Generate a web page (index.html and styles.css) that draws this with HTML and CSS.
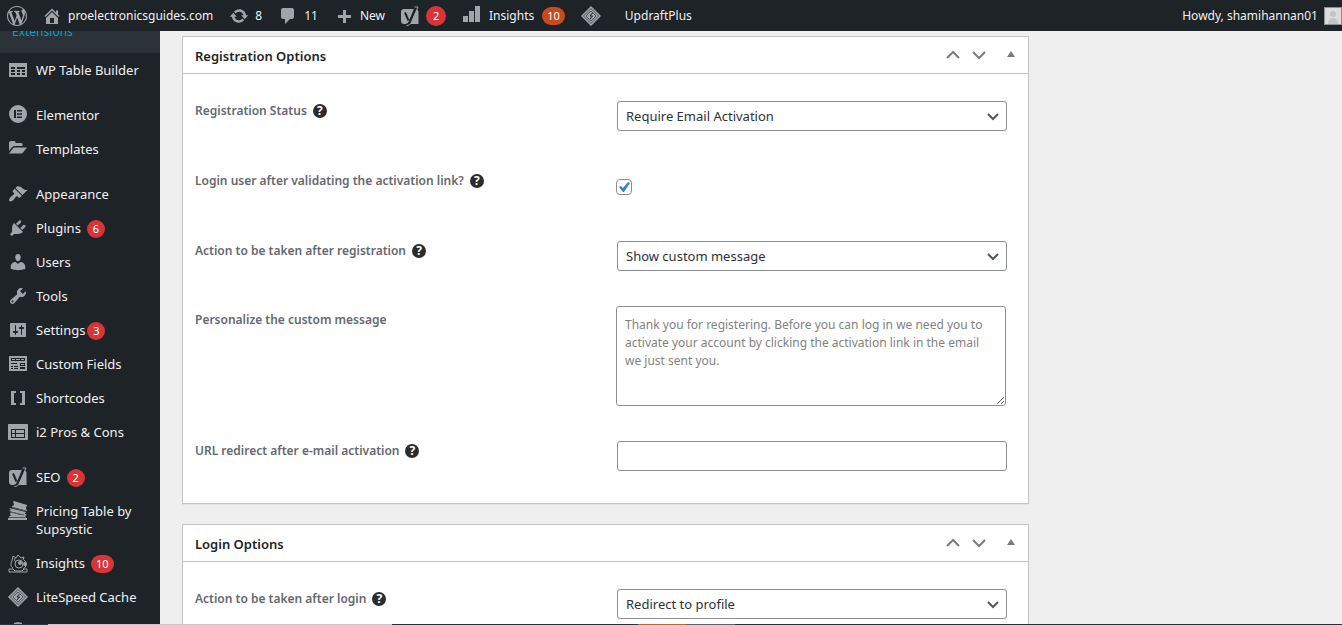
FILE: index.html
```html
<!DOCTYPE html>
<html lang="en">
<head>
    <meta charset="UTF-8">
    <meta name="viewport" content="width=device-width, initial-scale=1.0">
    <title>Registration Options</title>
    <link rel="stylesheet" href="styles.css">
</head>
<body>
    <!-- shared plugin icons -->
    <svg class="sprite" aria-hidden="true">
        <symbol id="icon-yoast" viewBox="0 0 20 20">
            <path d="M4 3h10l-5 15H4c-1.700 0-3-1.300-3-3V6c0-1.700 1.300-3 3-3zM16.500 3.500c1.300.5 2 1.500 2 2.500v12h-8z"/>
            <path class="cut" d="M5 6.500l3.500 8M15.500 2L9.500 16c-.7 2-1.500 2.800-3.500 2.800"/>
            <path class="slash" d="M14.500 1H18L11.500 16c-1 2.500-2.500 3.500-5 3.500"/>
        </symbol>
        <symbol id="icon-litespeed" viewBox="0 0 20 20">
            <path d="M10 0l10 10-10 10L0 10z"/>
            <path class="cut faint" d="M10 2.500l7.500 7.500-7.500 7.500L2.500 10z"/>
            <path class="cut faint" d="M10 5l5 5-5 5-5-5z"/>
            <path class="cut thin" d="M11.500 7L9 10h2.500L9 13"/>
        </symbol>
    </svg>

    <header class="adminbar">
        <a class="bar-item bar-logo" href="#" aria-label="About WordPress">
            <svg class="icon" viewBox="0 0 20 20"><path d="M20 10c0-5.510-4.490-10-10-10C4.480 0 0 4.490 0 10c0 5.520 4.480 10 10 10 5.510 0 10-4.480 10-10zM7.780 15.370L4.370 6.220c.55-.02 1.170-.08 1.170-.08.5-.06.44-1.130-.06-1.110 0 0-1.450.11-2.370.11-.18 0-.37 0-.58-.01C4.120 2.690 6.870 1.110 10 1.110c2.330 0 4.450.87 6.050 2.340-.68-.11-1.650.39-1.650 1.580 0 .74.45 1.360.9 2.100.35.61.55 1.360.55 2.460 0 1.490-1.400 5-1.400 5l-3.030-8.370c.54-.02.82-.17.82-.17.5-.05.44-1.250-.06-1.220 0 0-1.440.12-2.380.12-.87 0-2.330-.12-2.330-.12-.5-.03-.56 1.200-.06 1.220l.92.08 1.260 3.410zM17.410 10c.24-.64.74-1.870.43-4.250.7 1.290 1.050 2.710 1.050 4.250 0 3.290-1.730 6.240-4.400 7.780.97-2.590 1.940-5.200 2.920-7.780zM6.100 18.090C3.120 16.650 1.110 13.530 1.110 10c0-1.300.23-2.480.72-3.590C3.250 10.300 4.670 14.200 6.100 18.090zm4.030-6.630l2.580 6.980c-.86.29-1.760.45-2.710.45-.79 0-1.570-.11-2.290-.33.81-2.380 1.620-4.740 2.420-7.100z"/></svg>
        </a>
        <a class="bar-item" href="#">
            <svg class="icon" viewBox="0 0 20 20"><path d="M16 8.500l1.530 1.530-1.060 1.060L10 4.600l-6.470 6.490-1.060-1.060L10 2.500l4 4v-2h2v4zm-6-2.460l6 5.990V18H4v-5.970zM12 17v-5H8v5h4z"/></svg>
            proelectronicsguides.com
        </a>
        <a class="bar-item" href="#">
            <svg class="icon" viewBox="0 0 20 20"><path d="M10.200 3.280c3.530 0 6.430 2.610 6.920 6h2.080l-3.500 4-3.500-4h2.320c-.45-1.970-2.210-3.450-4.320-3.450-1.450 0-2.730.71-3.540 1.780L4.950 5.660C6.230 4.200 8.110 3.280 10.200 3.280zm-.4 13.440c-3.520 0-6.430-2.610-6.920-6H.8l3.500-4c1.170 1.330 2.330 2.670 3.500 4H5.480c.45 1.970 2.210 3.450 4.320 3.450 1.450 0 2.730-.71 3.540-1.780l1.710 1.950c-1.280 1.460-3.150 2.380-5.250 2.380z"/></svg>
            8
        </a>
        <a class="bar-item" href="#">
            <svg class="icon" viewBox="0 0 20 20"><path d="M5 2h9c1.100 0 2 .9 2 2v7c0 1.100-.9 2-2 2h-2l-5 5v-5H5c-1.100 0-2-.9-2-2V4c0-1.100.9-2 2-2z"/></svg>
            11
        </a>
        <a class="bar-item" href="#">
            <svg class="icon" viewBox="0 0 20 20"><path d="M17 9v3h-5v5H9v-5H4V9h5V4h3v5z"/></svg>
            New
        </a>
        <a class="bar-item bar-yoast" href="#" aria-label="Yoast SEO">
            <svg class="icon"><use href="#icon-yoast"/></svg>
            <span class="badge badge-large">2</span>
        </a>
        <a class="bar-item bar-insights" href="#">
            <svg class="icon" viewBox="0 0 20 20"><path d="M19 16V0h-5v16h5zm-6 0V5H8v11h5zm-6 0v-6H2v6h5z"/></svg>
            Insights
            <span class="badge badge-orange">10</span>
        </a>
        <a class="bar-item" href="#" aria-label="LiteSpeed Cache">
            <svg class="icon"><use href="#icon-litespeed"/></svg>
        </a>
        <a class="bar-item bar-updraft" href="#">UpdraftPlus</a>
        <a class="bar-item bar-account" href="#">
            Howdy, shamihannan01
            <svg class="avatar" viewBox="0 0 16 16"><path d="M0 0h16v16H0z"/><circle cx="8" cy="6" r="3"/><path class="shoulders" d="M3 16c0-4 2-6 5-6s5 2 5 6z"/></svg>
        </a>
    </header>

    <div class="wrap">
        <nav class="sidebar">
            <div class="submenu"><a href="#">Extensions</a></div>
            <ul class="menu">
                <li><a href="#"><svg class="icon" viewBox="0 0 20 20"><path fill-rule="evenodd" d="M1 3h18v14H1zM3 7v2h4V7zm6 0v2h8V7zM3 10v2h4v-2zm6 0v2h3v-2zm5 0v2h3v-2zM3 13v2h4v-2zm6 0v2h3v-2zm5 0v2h3v-2z"/></svg>WP Table Builder</a></li>
                <li class="group"><a href="#"><svg class="icon" viewBox="0 0 20 20"><path fill-rule="evenodd" d="M10 0a9 9 0 1 1 0 18 9 9 0 0 1 0-18zM6 5v8h2V5zm3 0v1.500h5V5zm0 3.200v1.600h5V8.200zm0 3.300V13h5v-1.500z"/></svg>Elementor</a></li>
                <li><a href="#"><svg class="icon" viewBox="0 0 20 20"><path d="M1 12V4c0-1 .5-2 2-2h3c1 0 1.500.5 1.500 1.500V4H13c1 0 1.500.5 1.500 1.500V7H7C5 7 4 8 3 9.500zM1 14.500L4.500 10C5 9 5.500 8.500 7 8.500h12L15 13.500c-.5.700-1 1-2 1z"/></svg>Templates</a></li>
                <li class="group"><a href="#"><svg class="icon" viewBox="0 0 20 20"><path d="M14.480 11.060L7.410 3.990l1.500-1.500c.5-.56 2.300-.47 3.510.32 1.210.8 1.430 1.280 2.910 2.100 1.180.64 2.450 1.260 4.450.85zm-.71.71L6.700 4.700 4.930 6.470c-.39.39-.39 1.020 0 1.410l1.060 1.060c.39.39.39 1.030 0 1.420-.6.6-1.430 1.110-2.210 1.690-.35.26-.7.53-1.010.84C1.430 14.230.4 16.080 1.400 17.070c.99 1 2.840-.03 4.180-1.360.31-.31.58-.66.85-1.020.57-.78 1.080-1.610 1.690-2.210.39-.39 1.020-.39 1.410 0l1.060 1.060c.39.39 1.020.39 1.410 0z"/></svg>Appearance</a></li>
                <li><a href="#"><svg class="icon" viewBox="0 0 20 20"><path d="M13.110 4.360L9.870 7.600 8 5.730l3.240-3.240c.35-.34 1.050-.2 1.560.32.52.51.66 1.210.31 1.550zm-8 1.770l.91-1.120 9.010 9.010-1.190.84c-.71.71-2.630 1.160-3.820 1.160H6.140L4.900 17.260c-.59.59-1.540.59-2.120 0-.59-.58-.59-1.530 0-2.120l1.240-1.240v-3.880c0-1.130.4-3.190 1.090-3.890zm7.260 3.970l3.240-3.240c.34-.35 1.040-.21 1.550.31.52.51.66 1.210.31 1.550l-3.240 3.250z"/></svg>Plugins <span class="badge">6</span></a></li>
                <li><a href="#"><svg class="icon" viewBox="0 0 20 20"><path d="M10 9.250c-2.270 0-2.730-3.440-2.730-3.440C7 4.020 7.820 2 9.970 2c2.160 0 2.980 2.020 2.710 3.810 0 0-.41 3.440-2.680 3.440zm0 2.570L12.720 10c2.390 0 4.520 2.330 4.520 4.530v2.490s-3.650 1.130-7.240 1.130c-3.650 0-7.240-1.130-7.240-1.130v-2.490c0-2.250 1.940-4.480 4.470-4.480z"/></svg>Users</a></li>
                <li><a href="#"><svg class="icon" viewBox="0 0 20 20"><path d="M16.680 9.770c-1.340 1.340-3.300 1.670-4.950.99l-5.410 6.520c-.99.99-2.590.99-3.580 0s-.99-2.590 0-3.570l6.520-5.420c-.68-1.650-.35-3.610.99-4.950 1.280-1.280 3.120-1.620 4.720-1.060l-2.890 2.890 2.820 2.820 2.860-2.870c.53 1.580.18 3.390-1.080 4.650zM3.810 16.210c.4.39 1.040.39 1.430 0 .4-.4.4-1.040 0-1.430-.39-.4-1.030-.4-1.430 0-.39.39-.39 1.030 0 1.430z"/></svg>Tools</a></li>
                <li><a class="tight" href="#"><svg class="icon" viewBox="0 0 20 20"><path d="M18 16V4c0-.55-.45-1-1-1H3c-.55 0-1 .45-1 1v12c0 .55.45 1 1 1h14c.55 0 1-.45 1-1zM8 11h1c.55 0 1 .45 1 1s-.45 1-1 1H8v1.500c0 .28-.22.5-.5.5s-.5-.22-.5-.5V13H6c-.55 0-1-.45-1-1s.45-1 1-1h1V5.500c0-.28.22-.5.5-.5s.5.22.5.5V11zm5-2h-1c-.55 0-1-.45-1-1s.45-1 1-1h1V5.500c0-.28.22-.5.5-.5s.5.22.5.5V7h1c.55 0 1 .45 1 1s-.45 1-1 1h-1v5.500c0 .28-.22.5-.5.5s-.5-.22-.5-.5V9z"/></svg>Settings <span class="badge">3</span></a></li>
                <li><a href="#"><svg class="icon" viewBox="0 0 20 20"><path fill-rule="evenodd" d="M1 2h18v15H1zM3 4v3h14V4zM3 9v1h6V9zm0 3v1h2v-1zm3 0v1h4v-1zm-3 2v1h2v-1zm3 0v1h4v-1zm6-5v3h5V9zm0 4v2h5v-2z"/><path d="M4 5h3v1H4zm4 0h4v1H8zm5 0h3v1h-3zm0 5h3v1h-3z"/></svg>Custom Fields</a></li>
                <li><a href="#"><svg class="icon" viewBox="0 0 20 20"><path d="M3 3h5v2H6v10h2v2H3zM12 3h5v14h-5v-2h2V5h-2z"/></svg>Shortcodes</a></li>
                <li><a href="#"><svg class="icon" viewBox="0 0 20 20"><path fill-rule="evenodd" d="M1 2h18c.6 0 1 .4 1 1v14c0 .6-.4 1-1 1H1c-.6 0-1-.4-1-1V3c0-.6.4-1 1-1zM3 7v9h14V7z"/><path d="M4 8h3v3H4zm4 0h8v3H8zm-4 4h3v3H4zm4 0h8v3H8z"/></svg>i2 Pros &amp; Cons</a></li>
                <li class="group"><a href="#"><svg class="icon"><use href="#icon-yoast"/></svg>SEO <span class="badge">2</span></a></li>
                <li><a href="#"><svg class="icon" viewBox="0 0 20 20"><path d="M6 0l13 4v1l-1 1v2l1 1v1L4 6V5l2-1V3L5 1z"/><path d="M1 7l17 4-2 3-15-4 2-1zM3 11l13 4H3l-1-2z"/><path d="M1 15l16-2 2 1-2 1 1 2h1v2H0v-2h2z"/><path class="cut faint" d="M4 6.500l14 3.500M2 11l14 3M1 16.500h16"/></svg>Pricing Table by Supsystic</a></li>
                <li><a href="#"><svg class="icon" viewBox="0 0 20 20"><path class="line" d="M4 8C2 11 3 14 5 15M4 8l1-5 3 2 2-3 3 3 3-1-1 3M1 16h4l2 2h7l2-2h3v3H1zM16 7c3 2 3 7-1 9M7 5c-1 2 0 4 1 4"/><circle class="line" cx="11" cy="11" r="4"/><circle cx="12" cy="10" r="2"/><circle cx="17" cy="11" r="2"/></svg>Insights <span class="badge">10</span></a></li>
                <li><a href="#"><svg class="icon"><use href="#icon-litespeed"/></svg>LiteSpeed Cache</a></li>
                <li><a href="#" aria-label="More"><svg class="icon" viewBox="0 0 20 20"><path d="M6 2c2-1 6-1 8 0v10H6z"/></svg></a></li>
            </ul>
        </nav>

        <main class="content">
            <section class="postbox">
                <div class="postbox-header">
                    <h2>Registration Options</h2>
                    <div class="handle-actions">
                        <button type="button" aria-label="Move up"><svg viewBox="0 0 14 14"><path d="M1 10l6-6 6 6"/></svg></button>
                        <button type="button" aria-label="Move down"><svg viewBox="0 0 14 14"><path d="M1 4l6 6 6-6"/></svg></button>
                        <button type="button" class="toggle" aria-label="Toggle panel"><svg viewBox="0 0 14 14"><path d="M3 9l4-6 4 6z"/></svg></button>
                    </div>
                </div>
                <div class="inside">
                    <div class="row">
                        <div class="row-label">
                            <label for="status">Registration Status</label>
                            <span class="help">?</span>
                        </div>
                        <select id="status" class="field"><option>Require Email Activation</option></select>
                    </div>
                    <div class="row">
                        <div class="row-label">
                            <label for="autologin">Login user after validating the activation link?</label>
                            <span class="help">?</span>
                        </div>
                        <input id="autologin" class="check" type="checkbox" checked>
                    </div>
                    <div class="row">
                        <div class="row-label">
                            <label for="after-reg">Action to be taken after registration</label>
                            <span class="help">?</span>
                        </div>
                        <select id="after-reg" class="field"><option>Show custom message</option></select>
                    </div>
                    <div class="row row-message">
                        <div class="row-label">
                            <label for="message">Personalize the custom message</label>
                        </div>
                        <textarea id="message" placeholder="Thank you for registering. Before you can log in we need you to activate your account by clicking the activation link in the email we just sent you."></textarea>
                    </div>
                    <div class="row">
                        <div class="row-label">
                            <label for="redirect">URL redirect after e-mail activation</label>
                            <span class="help">?</span>
                        </div>
                        <input id="redirect" class="field" type="text">
                    </div>
                </div>
            </section>

            <section class="postbox">
                <div class="postbox-header">
                    <h2>Login Options</h2>
                    <div class="handle-actions">
                        <button type="button" aria-label="Move up"><svg viewBox="0 0 14 14"><path d="M1 10l6-6 6 6"/></svg></button>
                        <button type="button" aria-label="Move down"><svg viewBox="0 0 14 14"><path d="M1 4l6 6 6-6"/></svg></button>
                        <button type="button" class="toggle" aria-label="Toggle panel"><svg viewBox="0 0 14 14"><path d="M3 9l4-6 4 6z"/></svg></button>
                    </div>
                </div>
                <div class="inside">
                    <div class="row">
                        <div class="row-label">
                            <label for="after-login">Action to be taken after login</label>
                            <span class="help">?</span>
                        </div>
                        <select id="after-login" class="field"><option>Redirect to profile</option></select>
                    </div>
                </div>
            </section>
        </main>
    </div>

    <div class="bottom-edge"></div>
</body>
</html>
```
FILE: styles.css
```css
* {
    box-sizing: border-box;
}

body {
    margin: 0;
    height: 100vh;
    overflow: hidden;
    display: flex;
    flex-direction: column;
    background: #efefef;
    color: #3c434a;
    font-family: "Noto Sans", "Open Sans", sans-serif;
    font-size: 13px;
}

a {
    color: inherit;
    text-decoration: none;
}

.sprite {
    position: absolute;
    width: 0;
    height: 0;
}

.icon {
    width: 20px;
    height: 20px;
    flex: none;
    fill: #a0a5aa;
}

.cut {
    fill: none;
    stroke: #1d2327;
    stroke-width: 2;
}

.slash,
.line {
    fill: none;
    stroke: #a0a5aa;
    stroke-width: 1;
}

.thin {
    stroke-width: 1;
}

.faint {
    stroke: #50565b;
    stroke-width: 1;
}

.badge {
    min-width: 18px;
    height: 18px;
    padding: 0 5px;
    border-radius: 9px;
    background: #d63638;
    color: #fff;
    font-size: 11px;
    line-height: 18px;
    text-align: center;
}

.badge-large {
    min-width: 20px;
    height: 20px;
    border-radius: 10px;
    line-height: 20px;
}

.badge-orange {
    background: #ca4a1f;
}

/* top bar */
.adminbar {
    flex: none;
    display: flex;
    align-items: center;
    height: 31px;
    background: #1d2327;
    color: #f0f0f1;
    font-size: 12px;
}

.bar-item {
    display: flex;
    align-items: center;
    gap: 6px;
    padding: 0 8px;
    white-space: nowrap;
}

.bar-logo {
    padding: 0 7px;
}

.bar-yoast {
    padding-left: 7px;
}

.bar-insights {
    gap: 8px;
    padding-left: 7px;
}

.bar-updraft {
    padding: 0 16px;
}

.bar-account {
    margin-left: auto;
    padding: 0;
}

.avatar {
    width: 18px;
    height: 18px;
    border: 1px solid #8c8f94;
    fill: #dcdcde;
}

.avatar circle,
.avatar .shoulders {
    fill: #c3c4c7;
}

/* sidebar */
.wrap {
    flex: 1;
    min-height: 0;
    display: flex;
}

.sidebar {
    flex: none;
    width: 160px;
    overflow: hidden;
    background: #1d2327;
    color: #f0f0f1;
}

.submenu {
    display: flex;
    align-items: flex-end;
    height: 22px;
    padding: 0 12px 12px;
    overflow: hidden;
    background: #2c3338;
    color: #00a0d2;
    font-size: 12px;
    line-height: 18px;
}

.menu {
    margin: 0;
    padding: 0;
    list-style: none;
}

.menu a {
    display: flex;
    gap: 6px;
    padding: 8px;
    line-height: 18px;
}

.menu .tight {
    gap: 2px;
}

.menu .icon {
    margin: -1px 2px -1px 0;
}

.menu .tight .icon {
    margin-right: 6px;
}

.menu .badge {
    position: relative;
    top: 1px;
}

.group {
    margin-top: 11px;
}

/* settings boxes */
.content {
    flex: 1;
    padding: 5px 313px 0 22px;
}

.postbox {
    margin-bottom: 20px;
    border: 1px solid #c3c4c7;
    background: #fff;
    box-shadow: 0 1px 1px rgba(0, 0, 0, 0.04);
}

.postbox-header {
    display: flex;
    align-items: center;
    justify-content: space-between;
    height: 37px;
    padding: 0 10px 0 12px;
    border-bottom: 1px solid #c3c4c7;
}

.postbox-header h2 {
    margin: 0;
    padding-top: 2px;
    color: #1d2327;
    font-size: 13px;
    font-weight: 600;
}

.handle-actions {
    display: flex;
    gap: 12px;
}

.handle-actions button {
    display: flex;
    padding: 0;
    border: 0;
    background: none;
}

.handle-actions svg {
    width: 14px;
    height: 14px;
    fill: none;
    stroke: #787c82;
    stroke-width: 2;
}

.handle-actions .toggle {
    margin-left: 6px;
}

.handle-actions .toggle svg {
    fill: #787c82;
    stroke: none;
}

.inside {
    padding: 12px 20px 7px 12px;
}

.row {
    display: grid;
    grid-template-columns: 421fr 392fr;
    align-items: start;
    min-height: 70px;
}

.row-label {
    display: flex;
    align-items: center;
    gap: 6px;
    padding-top: 16px;
    color: #646970;
    font-size: 12px;
    font-weight: 600;
    line-height: 18px;
}

.help {
    width: 14px;
    height: 14px;
    border-radius: 7px;
    background: #2c2c2c;
    color: #fff;
    font-size: 12px;
    font-weight: 700;
    line-height: 14px;
    text-align: center;
}

.field {
    height: 30px;
    margin: 15px 1px 0;
    padding: 0 8px;
    border: 1px solid #8c8f94;
    border-radius: 3px;
    background: #fff;
    color: #2c3338;
    font-family: inherit;
    font-size: 13px;
}

select.field {
    appearance: none;
    background: #fff url('data:image/svg+xml,<svg xmlns="http://www.w3.org/2000/svg" viewBox="0 0 12 12"><path d="M1 4l5 5 5-5" fill="none" stroke="%23555" stroke-width="2"/></svg>') no-repeat right 7px center / 12px 12px;
}

.check {
    appearance: none;
    width: 16px;
    height: 16px;
    margin: 23px 0 0;
    border: 1px solid #8c8f94;
    border-radius: 4px;
    background: #fff;
}

.check:checked {
    background: #fff url('data:image/svg+xml,<svg xmlns="http://www.w3.org/2000/svg" viewBox="0 0 14 14"><path d="M2 7l2-1 2 2 5-6 2 1-6 9H6z" fill="%233582c4"/></svg>') no-repeat center / 14px 14px;
}

textarea {
    width: calc(100% - 2px);
    height: 100px;
    margin: 10px 0 20px;
    padding: 9px 14px 8px 8px;
    border: 1px solid #8c8f94;
    border-radius: 3px;
    font-family: inherit;
    font-size: 12px;
    line-height: 18px;
}

textarea::placeholder {
    color: #828282;
}

.row-message .row-label {
    padding-top: 15px;
}

/* thin strip along the bottom of the window */
.bottom-edge {
    position: fixed;
    left: 0;
    right: 0;
    bottom: 0;
    height: 1px;
    background: linear-gradient(to right, #1f3a4d 48px, #c8c8c8 48px 392px, #22333d 392px 638px, #b3692f 638px 686px, #59636b 686px 735px, #22333d 735px);
}
```
